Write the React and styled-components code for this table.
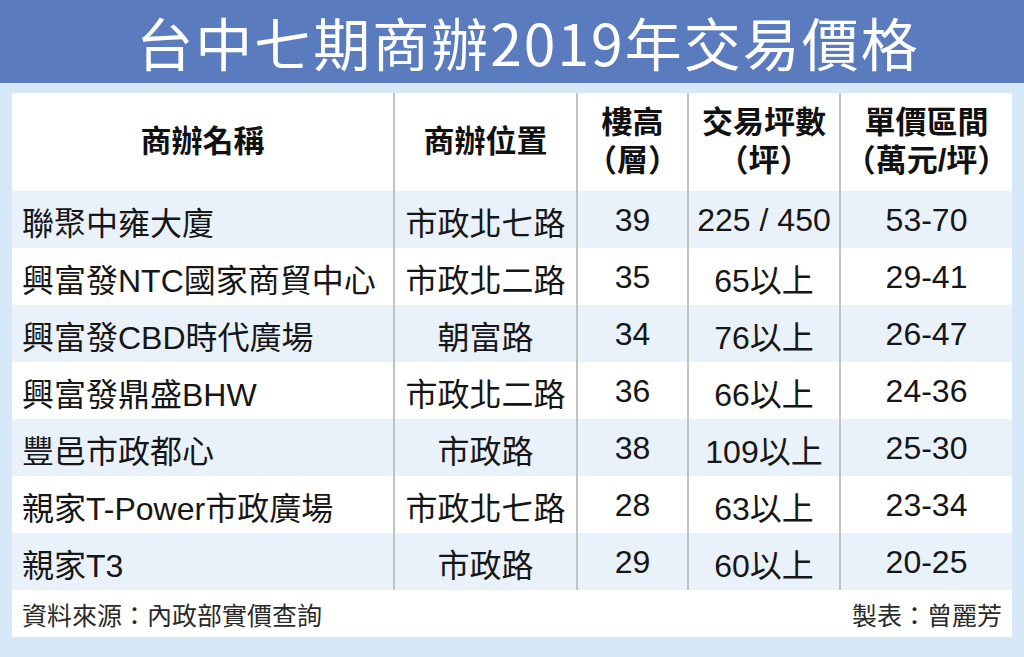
import React from "react";
import styled, { createGlobalStyle } from "styled-components";

const rows = [
  ["聯聚中雍大廈", "市政北七路", "39", "225 / 450", "53-70"],
  ["興富發NTC國家商貿中心", "市政北二路", "35", "65以上", "29-41"],
  ["興富發CBD時代廣場", "朝富路", "34", "76以上", "26-47"],
  ["興富發鼎盛BHW", "市政北二路", "36", "66以上", "24-36"],
  ["豐邑市政都心", "市政路", "38", "109以上", "25-30"],
  ["親家T-Power市政廣場", "市政北七路", "28", "63以上", "23-34"],
  ["親家T3", "市政路", "29", "60以上", "20-25"],
];

const heads = [
  ["商辦名稱"],
  ["商辦位置"],
  ["樓高", "（層）"],
  ["交易坪數", "（坪）"],
  ["單價區間", "（萬元/坪）"],
];

const App = () => {
  return (
    <React.Fragment>
      <GlobalStyle />
      <Page>
        <TitleBar>
          <span>台中七期商辦2019年交易價格</span>
        </TitleBar>
        <Panel>
          <Table>
            {heads.map((h, i) => (
              <HeadCell key={i} $last={i === 4}>
                {h.map((line) => (
                  <HeadLine key={line}>{line}</HeadLine>
                ))}
              </HeadCell>
            ))}
            {rows.map((r, ri) =>
              r.map((v, ci) => (
                <Cell
                  key={ri + "-" + ci}
                  $striped={ri % 2 === 0}
                  $left={ci === 0}
                  $last={ci === 4}
                >
                  {v}
                </Cell>
              ))
            )}
          </Table>
          <Footer>
            <span>資料來源：內政部實價查詢</span>
            <span>製表：曾麗芳</span>
          </Footer>
        </Panel>
      </Page>
    </React.Fragment>
  );
};

const GlobalStyle = createGlobalStyle`
  html, body {
    margin: 0;
    padding: 0;
    background: #d6e7f8;
  }
  body {
    font-family: "Liberation Sans", "Noto Sans CJK TC", sans-serif;
  }
`;

const Page = styled.div`
  width: 1024px;
  height: 657px;
  background: #d6e7f8;
  display: flex;
  flex-direction: column;
  overflow: hidden;
`;

const TitleBar = styled.div`
  height: 83px;
  flex: none;
  background: #5a7cbe;
  color: #fff;
  display: flex;
  align-items: center;
  justify-content: center;
  font-family: "Noto Sans CJK TC", sans-serif;
  font-size: 57px;
  font-weight: 400;
  line-height: 1.2;
  letter-spacing: 2px;
  padding-left: 32px;
`;

const Panel = styled.div`
  margin: 10px 12px 0 12px;
  width: 1000px;
  height: 544px;
  background: #fff;
  display: flex;
  flex-direction: column;
`;

const Table = styled.div`
  display: grid;
  grid-template-columns: 383px 183px 111px 152px 171px;
  grid-template-rows: 98px repeat(7, 57px);
`;

const HeadCell = styled.div`
  display: flex;
  flex-direction: column;
  align-items: center;
  justify-content: center;
  border-right: ${(p) => (p.$last ? "none" : "2px solid #c2c2c2")};
  font-family: "Liberation Sans", "Noto Sans CJK TC", sans-serif;
  font-weight: 700;
  font-size: 31px;
  color: #111;
`;

const HeadLine = styled.div`
  line-height: 38px;
  white-space: nowrap;
`;

const Cell = styled.div`
  display: flex;
  align-items: center;
  justify-content: ${(p) => (p.$left ? "flex-start" : "center")};
  padding-left: ${(p) => (p.$left ? "10px" : "0")};
  padding-top: 2px;
  background: ${(p) => (p.$striped ? "#e9f1fb" : "#fff")};
  border-right: ${(p) => (p.$last ? "none" : "2px solid #c2c2c2")};
  font-size: 32px;
  color: #161616;
  white-space: nowrap;
`;

const Footer = styled.div`
  flex: 1;
  display: flex;
  align-items: center;
  justify-content: space-between;
  padding: 0 10px;
  font-family: "Noto Sans CJK TC", sans-serif;
  font-size: 25px;
  color: #2a2a2a;
`;

export default App;
